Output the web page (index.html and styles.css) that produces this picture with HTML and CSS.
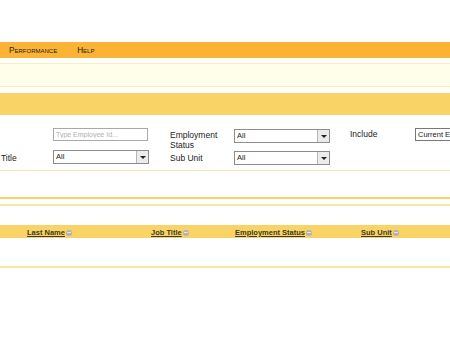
FILE: index.html
```html
<!DOCTYPE html>
<html lang="en">

<head>
    <meta charset="UTF-8">
    <title>Employee List</title>
    <link rel="stylesheet" href="styles.css">
</head>

<body>

    <div id="header"></div>

    <div id="menu">
        <a href="#">Performance</a>
        <a href="#">Help</a>
    </div>

    <div id="notice"></div>

    <div id="search-head"></div>

    <div id="search-box">
        <div class="filters">
            <label class="lbl">Id</label>
            <input class="text-input" type="text" placeholder="Type Employee Id...">
            <label class="lbl lbl-mid">Employment Status</label>
            <div class="fake-select">All<span class="arrow"></span></div>
            <label class="lbl lbl-include">Include</label>
            <div class="fake-select wide">Current Employees Only</div>

            <label class="lbl lbl-row2 lbl-first">Job Title</label>
            <div class="fake-select">All<span class="arrow"></span></div>
            <label class="lbl lbl-mid lbl-row2">Sub Unit</label>
            <div class="fake-select">All<span class="arrow"></span></div>
        </div>
    </div>

    <div id="results">
        <div class="toolbar"></div>
        <div class="table-head">
            <div><a href="#" class="col">Last Name</a><span class="sort"></span></div>
            <div><a href="#" class="col">Job Title</a><span class="sort"></span></div>
            <div><a href="#" class="col">Employment Status</a><span class="sort"></span></div>
            <div><a href="#" class="col">Sub Unit</a><span class="sort"></span></div>
        </div>
        <div class="table-body"></div>
    </div>

</body>

</html>
```

FILE: styles.css
```css
body {
    font-family: "Liberation Sans", Arial, sans-serif;
    font-size: 8.5px;
    color: #222;
    background-color: #fff;
    margin: 0;
    padding: 0;
    overflow: hidden;
}

#header {
    height: 42px;
}

#menu {
    height: 16px;
    background-color: #fcb234;
    display: flex;
    align-items: center;
    padding-left: 9px;
}

#menu a {
    font-size: 8.2px;
    font-variant: small-caps;
    color: #221e10;
    text-decoration: none;
    margin-right: 20px;
}

#notice {
    margin-top: 5px;
    height: 22px;
    background-color: #fffeeb;
    border-top: 1px solid #fcf0b6;
    border-bottom: 1px solid #fcee9c;
}

#search-head {
    margin-top: 6px;
    height: 22px;
    background-color: #f9d366;
}

#search-box {
    padding-top: 13px;
    height: 42px;
    border-bottom: 1px solid #fbe6ad;
}

.filters {
    display: grid;
    grid-template-columns: 71px 95px 22px 64px 96px 20px 65px 60px;
    grid-template-rows: 22px 14px;
    align-items: start;
    margin-left: -18px;
    white-space: nowrap;
}

.lbl {
    line-height: 10px;
    padding-top: 2px;
}

.lbl-mid {
    grid-column: 4;
    white-space: normal;
    width: 50px;
}

.lbl-include {
    grid-column: 7;
    padding-top: 1px;
}

.lbl-row2 {
    padding-top: 3px;
}

.lbl-first {
    padding-left: 3px;
}

.text-input {
    box-sizing: border-box;
    width: 95px;
    height: 13px;
    margin: 0;
    padding: 0 2px;
    border: 1px solid #a9a9a9;
    font-family: "Liberation Sans", Arial, sans-serif;
    font-size: 7px;
}

.text-input::placeholder {
    color: #b0b0b0;
}

.fake-select {
    box-sizing: border-box;
    position: relative;
    width: 96px;
    height: 14px;
    border: 1px solid #8c8c8c;
    font-size: 7.5px;
    line-height: 12px;
    padding-left: 2px;
    background-color: #fff;
    overflow: hidden;
    white-space: nowrap;
    margin-top: 1px;
}

.fake-select.wide {
    width: 40px;
    height: 13px;
    margin-top: 0;
    border-color: #777;
    overflow: visible;
}

.arrow {
    position: absolute;
    right: 0;
    top: 0;
    width: 11px;
    height: 12px;
    background-color: #ececec;
    border-left: 1px solid #b5b5b5;
}

.arrow::after {
    content: "";
    position: absolute;
    left: 3px;
    top: 5px;
    border-left: 3px solid transparent;
    border-right: 3px solid transparent;
    border-top: 3px solid #222;
}

.filters .lbl-row2 + .fake-select {
    grid-column: 2;
    margin-top: 0;
}

.filters .lbl-mid.lbl-row2 + .fake-select {
    grid-column: 5;
    margin-top: 1px;
}

#results {
    margin-top: 26px;
    border-top: 2px solid #f9d366;
}

.toolbar {
    height: 5px;
    border-bottom: 2px solid #fbe4a6;
}

.table-head {
    margin-top: 19px;
    height: 13px;
    background-color: #f9d366;
    display: grid;
    grid-template-columns: 124px 84px 126px auto;
    align-items: center;
    padding-left: 27px;
    white-space: nowrap;
}

.col {
    font-size: 7.5px;
    font-weight: bold;
    color: #3a3a28;
}

.sort {
    display: inline-block;
    vertical-align: -1px;
    width: 6px;
    height: 6px;
    margin-left: 1px;
    border-radius: 50%;
    background:
        linear-gradient(#e6e6e6, #e6e6e6) center / 4px 1px no-repeat,
        #b3b3b3;
}

.table-body {
    height: 28px;
    border-bottom: 2px solid #fbe4a6;
}
```
